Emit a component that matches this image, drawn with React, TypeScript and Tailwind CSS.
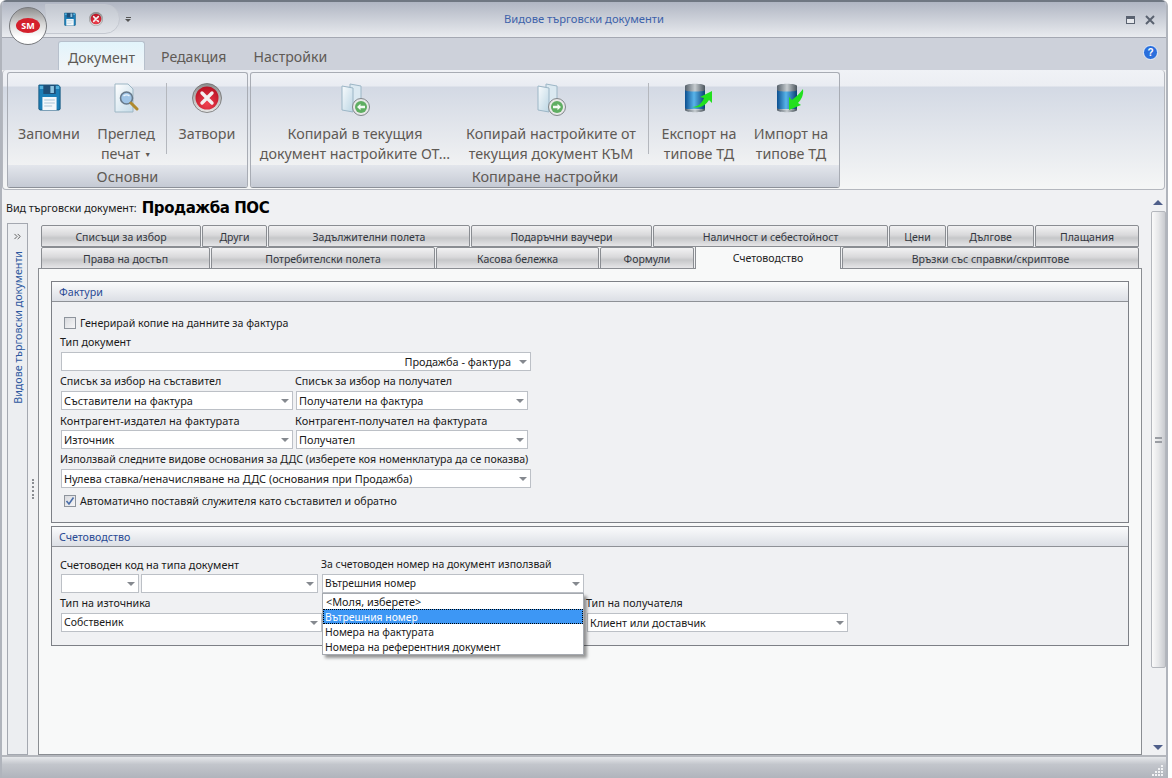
import type { ReactNode } from "react";
import { ChevronsRight } from "lucide-react";

const FONT = "font-['Noto_Sans','Open_Sans',sans-serif]";

function Floppy({ small }: { small?: boolean }) {
  return (
    <svg width={small ? 12 : 23} height={small ? 14 : 28} viewBox="0 0 26 28" preserveAspectRatio="none">
      <path d="M1 2h22l2 2v22l-1 1H2l-1-1z" fill="#1c7fb8" stroke="#14587f" strokeWidth="1" />
      <rect x="2" y="3" width="22" height="3" fill="#52b0dc" />
      <rect x="6" y="2" width="14" height="9" fill="#1f4f78" />
      <rect x="14" y="3" width="4" height="7" fill="#8fc5e0" />
      <path d="M5 14h16v13H5z" fill="#f4f8fb" />
      <path d="M7 17h12M7 20h12M7 23h9" stroke="#a8c4d6" strokeWidth="1" />
    </svg>
  );
}

function CloseIcon({ size = 30 }: { size?: number }) {
  return (
    <svg width={size} height={size} viewBox="0 0 30 30">
      <defs>
        <linearGradient id="closeRing" x1="0" y1="0" x2="0" y2="1">
          <stop offset="0" stopColor="#8c8c8c" />
          <stop offset="1" stopColor="#e8e8e8" />
        </linearGradient>
        <radialGradient id="closeRed" cx="0.5" cy="0.75" r="0.8">
          <stop offset="0" stopColor="#f0414f" />
          <stop offset="1" stopColor="#b30d1f" />
        </radialGradient>
      </defs>
      <circle cx="15" cy="15" r="14.5" fill="url(#closeRing)" stroke="#6e6e6e" strokeWidth="0.8" />
      <circle cx="15" cy="15" r="11.5" fill="url(#closeRed)" />
      <path d="M10 10l10 10M20 10L10 20" stroke="#f4f1f1" strokeWidth="3.4" strokeLinecap="round" />
    </svg>
  );
}

function PreviewIcon() {
  return (
    <svg width="26" height="32" viewBox="0 0 26 32">
      <defs>
        <linearGradient id="pageBlue" x1="0" y1="0" x2="1" y2="1">
          <stop offset="0" stopColor="#ffffff" />
          <stop offset="1" stopColor="#c4dbe8" />
        </linearGradient>
      </defs>
      <path d="M2 1h13l5 5v23H2z" fill="url(#pageBlue)" stroke="#9db6c4" strokeWidth="1" />
      <circle cx="13.5" cy="15" r="6" fill="#9fc4e6" stroke="#67798a" strokeWidth="1.6" />
      <path d="M10.5 13a4 3 0 0 1 6 0" stroke="#eaf4fc" strokeWidth="1.4" fill="none" />
      <path d="M18 20l6 6" stroke="#b08a2e" strokeWidth="3" strokeLinecap="round" />
    </svg>
  );
}

function CopyDocIcon({ back }: { back?: boolean }) {
  return (
    <svg width="30" height="34" viewBox="0 0 30 34">
      <defs>
        <linearGradient id="copyPage" x1="0" y1="0" x2="1" y2="1">
          <stop offset="0" stopColor="#f8fbfd" />
          <stop offset="1" stopColor="#bcd6e4" />
        </linearGradient>
      </defs>
      <path d="M10 1l11 2v22l-11-2z" fill="#dbe9f1" stroke="#9cb6c6" strokeWidth="1" />
      <path d="M2 3l11 2v24L2 27z" fill="url(#copyPage)" stroke="#9cb6c6" strokeWidth="1" />
      <circle cx="21" cy="24" r="8.5" fill="#e8e8e8" stroke="#80868a" strokeWidth="1" />
      <circle cx="21" cy="24" r="6" fill="#5fae62" />
      {back ? (
        <path d="M17 24l3.5-3.2v2h4.5v2.4h-4.5v2z" fill="#f4fbf4" />
      ) : (
        <path d="M25 24l-3.5-3.2v2H17v2.4h4.5v2z" fill="#f4fbf4" />
      )}
    </svg>
  );
}

function DbIcon({ up }: { up?: boolean }) {
  return (
    <svg width="30" height="30" viewBox="0 0 30 30">
      <defs>
        <linearGradient id="dbBody" x1="0" y1="0" x2="1" y2="0">
          <stop offset="0" stopColor="#0c4f90" />
          <stop offset="0.45" stopColor="#58b4ea" />
          <stop offset="1" stopColor="#0a3f76" />
        </linearGradient>
        <linearGradient id="dbCap" x1="0" y1="0" x2="1" y2="0">
          <stop offset="0" stopColor="#55606a" />
          <stop offset="0.5" stopColor="#c6ccd0" />
          <stop offset="1" stopColor="#4a545c" />
        </linearGradient>
      </defs>
      <rect x="1" y="6" width="20" height="20" fill="url(#dbBody)" />
      <path d="M1 3c0-3 20-3 20 0v4c0 2-20 2-20 0z" fill="url(#dbCap)" />
      <path d="M1 25c0 2 20 2 20 0v2c0 3-20 3-20 0z" fill="url(#dbCap)" />
      {up ? (
        <path d="M8 24c6 0 10-4 12-9l-4-1 12-6v12l-3-3c-3 5-9 9-17 7z" fill="#22e01f" />
      ) : (
        <path d="M27 6c1 6-2 11-5 14l3 2-12 5V14l3 3c4-3 8-7 11-11z" fill="#22e01f" />
      )}
    </svg>
  );
}

function RibbonButton({ icon, lines, width, arrow }: { icon: ReactNode; lines: string[]; width: string; arrow?: boolean }) {
  return (
    <div className={`${width} flex flex-col items-center pt-[10px]`}>
      <div className="h-[41px] flex items-start justify-center">{icon}</div>
      <div className="text-[14.3px] leading-[20px] text-[#5f5a55] text-center whitespace-nowrap">
        {lines.map((l, i) => (
          <div key={l}>
            {l}
            {arrow && i === lines.length - 1 && <span className="text-[7px] align-middle ml-[4px]">▼</span>}
          </div>
        ))}
      </div>
    </div>
  );
}

function RibbonGroup({ title, width, children }: { title: string; width: string; children: ReactNode }) {
  return (
    <div className={`${width} h-[116px] flex flex-col border border-[#a8acb4] border-b-[#8c9098] rounded-[3px] overflow-hidden bg-[linear-gradient(#f0f2f6_0,#e9ecf2_13px,#d3d9e4_14px,#f1f2f3_93px)]`}>
      <div className="h-[92px] flex">{children}</div>
      <div className="h-[22px] text-[14.5px] leading-[22px] text-center text-[#5f5a55] bg-[linear-gradient(#e3e6ec,#c5cad4)]">{title}</div>
    </div>
  );
}

function Sep({ margin }: { margin: string }) {
  return <div className={`${margin} w-px h-[71px] mt-[10px] bg-[#b4b7bd]`} />;
}

function PageTab({ label, width, active }: { label: string; width: string; active?: boolean }) {
  if (active) {
    return (
      <div className={`${width} h-[23px] -mt-px mb-[-2px] z-10 relative border border-b-0 border-[#8a8d92] bg-[#f8f9f9] text-[10.6px] leading-[23px] text-center text-[#222]`}>
        {label}
      </div>
    );
  }
  return (
    <div className={`${width} h-[22px] border border-[#8a8d92] rounded-t-[2px] text-[10.5px] leading-[22px] text-center text-[#33373f] bg-[linear-gradient(#f2f2f3,#d9d9db_45%,#c6c7c9_60%,#e6e6e8)] whitespace-nowrap`}>
      {label}
    </div>
  );
}

function Arrow() {
  return <span className="w-0 h-0 border-x-[4px] border-x-transparent border-t-[4px] border-t-[#85898f]" />;
}

function Select({ value, width, right, size = "text-[10.9px]" }: { value?: string; width: string; right?: boolean; size?: string }) {
  return (
    <div className={`${width} ${size} h-[19px] shrink-0 border border-[#bcc0c6] bg-white flex items-center pl-[2px] pr-[3px] text-[#1a1a1a]`}>
      <span className={`flex-1 pt-px whitespace-nowrap overflow-hidden ${right ? "text-right pr-[8px]" : ""}`}>{value}</span>
      <Arrow />
    </div>
  );
}

function Field({ label, children, width, size = "text-[10.7px]" }: { label: string; children: ReactNode; width: string; size?: string }) {
  return (
    <div className={`${width} shrink-0`}>
      <div className={`${size} h-[20px] leading-[21px] text-[#1a1a1a] whitespace-nowrap -ml-px`}>{label}</div>
      {children}
    </div>
  );
}

function Check({ checked, label }: { checked?: boolean; label: string }) {
  return (
    <div className="flex items-center h-[16px] ml-[3px] text-[10.65px] leading-[18px] text-[#1a1a1a]">
      <div className="w-[12px] h-[12px] border border-[#8e949c] bg-[linear-gradient(135deg,#d8dade,#f6f6f7)] flex items-center justify-center mr-[4px]">
        {checked && (
          <svg width="10" height="10" viewBox="0 0 10 10">
            <path d="M1.5 5l2.5 3 4.5-6.5" stroke="#4a6ea9" strokeWidth="1.6" fill="none" />
          </svg>
        )}
      </div>
      {label}
    </div>
  );
}

function GroupBox({ title, height, children }: { title: string; height: string; children: ReactNode }) {
  return (
    <div className={`${height} border border-[#7d8086] bg-[#f0f1f3]`}>
      <div className="h-[20px] border-b border-[#8e9196] pl-[7px] text-[10.7px] leading-[21px] text-[#2a4a94] bg-[linear-gradient(#fafbfc,#dcdfe5)]">{title}</div>
      {children}
    </div>
  );
}

export default function App() {
  return (
    <div className={`w-[1172px] h-[778px] overflow-hidden bg-white ${FONT}`}>
      <div className="relative w-[1168px] h-full flex flex-col border-x-2 border-x-[#b0b4bc] rounded-t-[6px] overflow-hidden bg-[#f0f1f3]">
        {/* title bar */}
        <div className="h-[38px] shrink-0 flex items-center border-t-2 border-t-[#6f7782] border-b border-b-[#a4a8b2] bg-[linear-gradient(#b0b6c3,#e9ebef)] relative">
          <div className="ml-[43px] w-[75px] h-[30px] mt-[-2px] rounded-r-[15px] bg-[linear-gradient(#c2c7d0,#e2e5ea)] border border-[#c4c8d0] flex items-center pl-[18px] gap-[13px]">
            <Floppy small />
            <CloseIcon size={14} />
          </div>
          <div className="ml-[5px] flex flex-col items-center gap-[1px]">
            <span className="w-[5px] h-px bg-[#555]" />
            <span className="w-0 h-0 border-x-[3px] border-x-transparent border-t-[3px] border-t-[#555]" />
          </div>
          <div className="absolute left-0 right-0 text-center text-[11.2px] text-[#3d62aa]">Видове търговски документи</div>
          <div className="absolute right-[11px] top-[13px] flex items-center gap-[10px]">
            <span className="w-[9px] h-[8px] border border-[#5a6270] border-t-[3px] bg-[#e6e8ec]" />
            <svg width="10" height="10" viewBox="0 0 10 10">
              <path d="M1 1l8 8M9 1l-8 8" stroke="#5a6270" strokeWidth="2" />
            </svg>
          </div>
        </div>

        {/* app orb */}
        <div className="absolute left-[7px] top-[7px] w-[38px] h-[38px] rounded-full border border-[#77797d] bg-[linear-gradient(#8f8f8f,#d8d8d8_45%,#ffffff_80%)] flex items-center justify-center z-20">
          <div className="w-[24px] h-[15px] -mt-[1px] rounded-[50%] bg-[#d4202c] text-white text-[9px] font-bold leading-[15px] text-center">SM</div>
        </div>

        {/* ribbon tabs */}
        <div className="h-[32px] shrink-0 flex items-end bg-[#cdd1da] pl-[56px] text-[14.1px] text-[#5f5a55] relative">
          <div className="w-[87px] h-[29px] border border-b-0 border-[#b7c0cc] rounded-t-[3px] bg-[linear-gradient(#e2f4fb,#f2f5f8)] text-center leading-[31px]">Документ</div>
          <div className="ml-[16px] h-[29px] leading-[32px]">Редакция</div>
          <div className="ml-[27px] h-[29px] leading-[32px]">Настройки</div>
          <svg className="absolute right-[8px] top-[7px]" width="15" height="15" viewBox="0 0 15 15">
            <circle cx="7.5" cy="7.5" r="7" fill="#2a6fdc" stroke="#fff" strokeWidth="0.8" />
            <text x="7.5" y="11" textAnchor="middle" fontSize="10" fontWeight="700" fill="#fff" fontFamily="Liberation Sans">?</text>
          </svg>
        </div>

        {/* ribbon */}
        <div className="h-[121px] shrink-0 bg-[#f0f1f3] pr-[1px]">
          <div className="h-[120px] flex gap-[2px] pl-[4px] pt-[2px] rounded-[4px] border-x border-b border-[#b4b7be] bg-[linear-gradient(#f0f2f6_0,#eceef3_16px,#d3d9e4_17px,#f5f6f6_118px)]">
            <RibbonGroup title="Основни" width="w-[241px]">
              <RibbonButton icon={<Floppy />} lines={["Запомни"]} width="w-[82px]" />
              <RibbonButton icon={<PreviewIcon />} lines={["Преглед", "печат"]} width="w-[72px]" arrow />
              <Sep margin="ml-[4px]" />
              <RibbonButton icon={<CloseIcon />} lines={["Затвори"]} width="w-[80px]" />
            </RibbonGroup>
            <RibbonGroup title="Копиране настройки" width="w-[590px]">
              <RibbonButton icon={<CopyDocIcon back />} lines={["Копирай в текущия", "документ настройките ОТ..."]} width="w-[208px]" />
              <RibbonButton icon={<CopyDocIcon />} lines={["Копирай настройките от", "текущия документ КЪМ"]} width="w-[184px]" />
              <Sep margin="ml-[5px]" />
              <RibbonButton icon={<DbIcon up />} lines={["Експорт на", "типове ТД"]} width="w-[100px]" />
              <RibbonButton icon={<DbIcon />} lines={["Импорт на", "типове ТД"]} width="w-[84px]" />
            </RibbonGroup>
          </div>
        </div>

        {/* body */}
        <div className="flex-1 min-h-0 flex">
          <div className="w-[1148px] flex flex-col">
            <div className="h-[32px] shrink-0 flex items-center gap-[5px] pl-[4px] pt-[3px]">
              <span className="text-[10.7px] text-[#1a1a1a]">Вид търговски документ:</span>
              <span className="text-[15px] font-bold text-black font-['DejaVu_Sans',sans-serif] tracking-[-0.45px]">Продажба ПОС</span>
            </div>
            <div className="flex-1 min-h-0 flex">
              {/* collapsed navigator */}
              <div className="ml-[5px] w-[21px] border border-[#a4a8b0] bg-[#eceef1] flex flex-col items-center pt-[7px]">
                <ChevronsRight size={11} className="text-[#555]" />
                <div className="mt-[9px] ml-px text-[10.7px] text-[#2c58a0] [writing-mode:vertical-rl] rotate-180 whitespace-nowrap">Видове търговски документи</div>
              </div>
              <div className="w-[10px] flex flex-col items-center justify-center">
                <div className="w-[2px] h-[20px] border-l-2 border-dotted border-[#8a8d92]" />
              </div>
              {/* tabbed page */}
              <div className="w-[1104px] flex flex-col">
                <div className="pl-[3px] pt-[2px] flex gap-[1px] h-[24px] shrink-0">
                  <PageTab label="Списъци за избор" width="w-[160px]" />
                  <PageTab label="Други" width="w-[65px]" />
                  <PageTab label="Задължителни полета" width="w-[202px]" />
                  <PageTab label="Подаръчни ваучери" width="w-[181px]" />
                  <PageTab label="Наличност и себестойност" width="w-[235px]" />
                  <PageTab label="Цени" width="w-[57px]" />
                  <PageTab label="Дългове" width="w-[87px]" />
                  <PageTab label="Плащания" width="w-[104px]" />
                </div>
                <div className="pl-[3px] flex gap-[1px] h-[21px] shrink-0">
                  <PageTab label="Права на достъп" width="w-[169px]" />
                  <PageTab label="Потребителски полета" width="w-[224px]" />
                  <PageTab label="Касова бележка" width="w-[163px]" />
                  <PageTab label="Формули" width="w-[94px]" />
                  <PageTab label="Счетоводство" width="w-[146px]" active />
                  <PageTab label="Връзки със справки/скриптове" width="w-[297px]" />
                </div>
                <div className="flex-1 min-h-0 border border-[#8a8d92] bg-[#f8f9f9] px-[12px] pt-[12px] flex flex-col gap-[3px]">
                  <GroupBox title="Фактури" height="h-[242px]">
                    <div className="pl-[9px] pt-[13px]">
                      <Check label="Генерирай копие на данните за фактура" />
                      <div className="mt-[1px]">
                        <Field label="Тип документ" width="w-[470px]">
                          <Select value="Продажба - фактура" width="w-[470px]" right />
                        </Field>
                      </div>
                      <div className="flex gap-[2px]">
                        <Field label="Списък за избор на съставител" width="w-[233px]">
                          <Select value="Съставители на фактура" width="w-[232px]" />
                        </Field>
                        <Field label="Списък за избор на получател" width="w-[233px]">
                          <Select value="Получатели на фактура" width="w-[232px]" />
                        </Field>
                      </div>
                      <div className="flex gap-[2px]">
                        <Field label="Контрагент-издател на фактурата" width="w-[233px]" size="text-[11px]">
                          <Select value="Източник" width="w-[232px]" />
                        </Field>
                        <Field label="Контрагент-получател на фактурата" width="w-[233px]" size="text-[11px]">
                          <Select value="Получател" width="w-[232px]" />
                        </Field>
                      </div>
                      <Field label="Използвай следните видове основания за ДДС (изберете коя номенклатура да се показва)" width="w-[470px]" size="text-[10.6px]">
                        <Select value="Нулева ставка/неначисляване на ДДС (основания при Продажба)" width="w-[470px]" />
                      </Field>
                      <div className="mt-[5px]">
                        <Check checked label="Автоматично поставяй служителя като съставител и обратно" />
                      </div>
                    </div>
                  </GroupBox>
                  <GroupBox title="Счетоводство" height="h-[120px]">
                    <div className="pl-[9px] pt-[7px]">
                      <div className="flex">
                        <Field label="Счетоводен код на типа документ" width="w-[261px]" size="text-[10.85px]">
                          <div className="flex gap-[2px]">
                            <Select width="w-[78px]" />
                            <Select width="w-[177px]" />
                          </div>
                        </Field>
                        <Field label="За счетоводен номер на документ използвай" width="w-[262px]" size="text-[10.45px]">
                          <div className="relative">
                            <Select value="Вътрешния номер" width="w-[262px]" size="text-[10.2px]" />
                            <div className="absolute left-0 top-[19px] z-30 w-[262px] h-[62px] border border-[#a6aab0] bg-white text-[10.4px] text-[#1a1a1a] shadow-[3px_3px_3px_rgba(0,0,0,0.4)]">
                              <div className="h-[15px] leading-[16px] pl-[3px] text-[10.9px]">&lt;Моля, изберете&gt;</div>
                              <div className="h-[15px] leading-[14px] pl-px bg-[#3d97f5] text-white border border-dotted border-black">Вътрешния номер</div>
                              <div className="h-[15px] leading-[16px] pl-[2px]">Номера на фактурата</div>
                              <div className="h-[15px] leading-[16px] pl-[2px]">Номера на референтния документ</div>
                            </div>
                          </div>
                        </Field>
                      </div>
                      <div className="flex">
                        <Field label="Тип на източника" width="w-[526px]">
                          <Select value="Собственик" width="w-[261px]" size="text-[10.5px]" />
                        </Field>
                        <Field label="Тип на получателя" width="w-[261px]">
                          <Select value="Клиент или доставчик" width="w-[261px]" size="text-[10.7px]" />
                        </Field>
                      </div>
                    </div>
                  </GroupBox>
                </div>
              </div>
            </div>
          </div>
          {/* scrollbar */}
          <div className="w-[16px] pt-[3px] bg-[#f0f1f3] flex flex-col items-center">
            <div className="h-[17px] flex items-center">
              <span className="w-0 h-0 border-x-[5px] border-x-transparent border-b-[5px] border-b-[#4f5f8a]" />
            </div>
            <div className="w-[15px] h-[457px] border border-[#b4b7bd] rounded-[2px] bg-[linear-gradient(90deg,#fafafa,#e6e7e9_50%,#c8cacf)] flex items-center justify-center">
              <span className="w-[7px] h-[6px] border-y-2 border-[#9a9da3]" />
            </div>
            <div className="flex-1" />
            <div className="h-[15px] flex items-center">
              <span className="w-0 h-0 border-x-[5px] border-x-transparent border-t-[5px] border-t-[#4f5f8a]" />
            </div>
          </div>
        </div>

        {/* status bar */}
        <div className="h-[23px] shrink-0 border-t-2 border-t-[#b4b7bd] bg-[linear-gradient(#e6e8eb,#c3c6cc_35%,#b0b4bc)] flex justify-end items-end pr-[2px] pb-[2px]">
          <svg width="12" height="12" viewBox="0 0 12 12" fill="#f2f3f5">
            <rect x="9" y="1" width="2" height="2" />
            <rect x="6" y="4" width="2" height="2" />
            <rect x="9" y="4" width="2" height="2" />
            <rect x="3" y="7" width="2" height="2" />
            <rect x="6" y="7" width="2" height="2" />
            <rect x="9" y="7" width="2" height="2" />
            <rect x="0" y="10" width="2" height="2" />
            <rect x="3" y="10" width="2" height="2" />
            <rect x="6" y="10" width="2" height="2" />
            <rect x="9" y="10" width="2" height="2" />
          </svg>
        </div>
      </div>
    </div>
  );
}
